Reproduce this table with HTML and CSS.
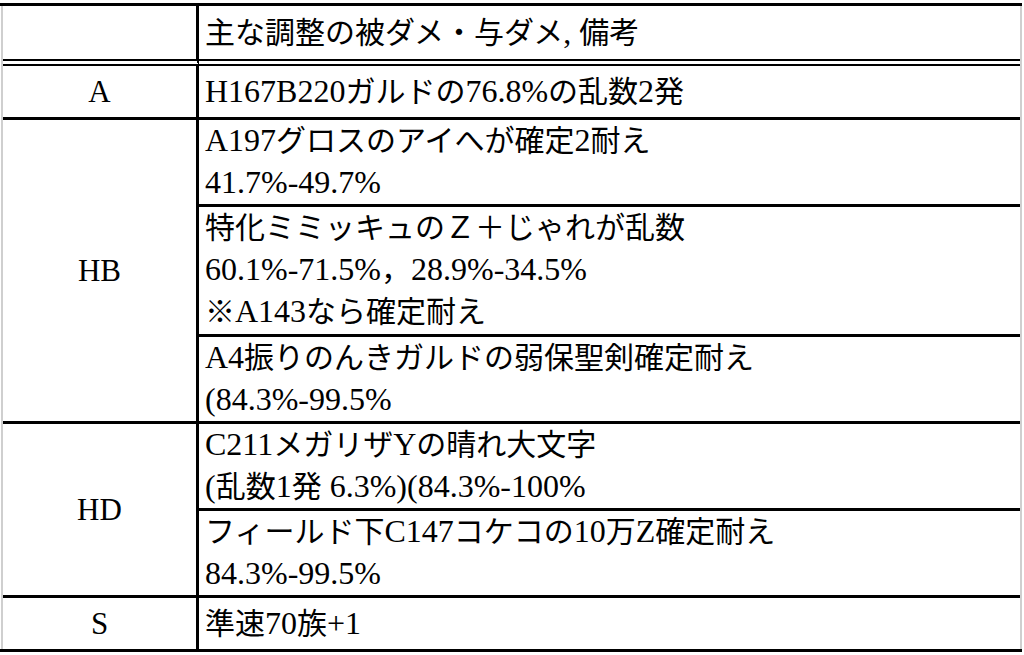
FILE: index.html
```html
<!DOCTYPE html>
<html lang="ja">
<head>
<meta charset="utf-8">
<title>調整表</title>
<link rel="stylesheet" href="styles.css">
</head>
<body>
<div class="sheet">
  <div class="grid">
    <div class="k head"></div>
    <div class="v head">主な調整の被ダメ・与ダメ<span class="en">, </span>備考</div>

    <div class="k one">A</div>
    <div class="v one"><span class="en">H167B220</span>ガルドの<span class="en">76.8%</span>の乱数<span class="en">2</span>発</div>

    <div class="k hb">HB</div>
    <div class="v two"><span class="en">A197</span>グロスのアイへが確定<span class="en">2</span>耐え<br><span class="en">41.7%-49.7%</span></div>
    <div class="v three">特化ミミッキュのＺ＋じゃれが乱数<br><span class="en">60.1%-71.5%</span>，<span class="en">28.9%-34.5%</span><br>※<span class="en">A143</span>なら確定耐え</div>
    <div class="v two"><span class="en">A4</span>振りのんきガルドの弱保聖剣確定耐え<br><span class="en">(84.3%-99.5%</span></div>

    <div class="k hd">HD</div>
    <div class="v two"><span class="en">C211</span>メガリザ<span class="en">Y</span>の晴れ大文字<br><span class="en">(</span>乱数<span class="en">1</span>発<span class="en"> 6.3%)(84.3%-100%</span></div>
    <div class="v two">フィールド下<span class="en">C147</span>コケコの<span class="en">10</span>万<span class="en">Z</span>確定耐え<br><span class="en">84.3%-99.5%</span></div>

    <div class="k one last">S</div>
    <div class="v one last">準速<span class="en">70</span>族<span class="en">+1</span></div>
  </div>
</div>
</body>
</html>
```

FILE: styles.css
```css
* {
  box-sizing: content-box;
}

body {
  margin: 0;
  background: #ffffff;
  color: #000000;
  font-family: "Liberation Serif", "Noto Sans CJK JP", serif;
}

.sheet {
  width: 1022px;
  margin-top: 3px;
  border-top: 3px solid #000000;
  border-bottom: 3px solid #000000;
}

.grid {
  display: grid;
  grid-template-columns: 196px 1fr;
  margin-left: 1px;
  border-left: 2px solid #cfcfcf;
  border-right: 2px solid #cfcfcf;
}

.k {
  grid-column: 1;
  border-right: 3px solid #000000;
  border-bottom: 3px solid #000000;
  display: flex;
  align-items: center;
  justify-content: center;
  font-size: 31px;
}

.v {
  grid-column: 2;
  border-bottom: 3px solid #000000;
  padding: 0 7px 0 6px;
  font-size: 30px;
  line-height: 42px;
  white-space: nowrap;
  overflow: hidden;
}

.en {
  font-size: 32px;
  line-height: 1;
}

.head {
  height: 53px;
  line-height: 53px;
  border-bottom: 7px double #000000;
}

.one {
  height: 51px;
  line-height: 51px;
}

.two {
  height: 84px;
}

.three {
  height: 127px;
}

.hb {
  grid-row: span 3;
}

.hd {
  grid-row: span 2;
}

.last {
  border-bottom: none;
}
```
